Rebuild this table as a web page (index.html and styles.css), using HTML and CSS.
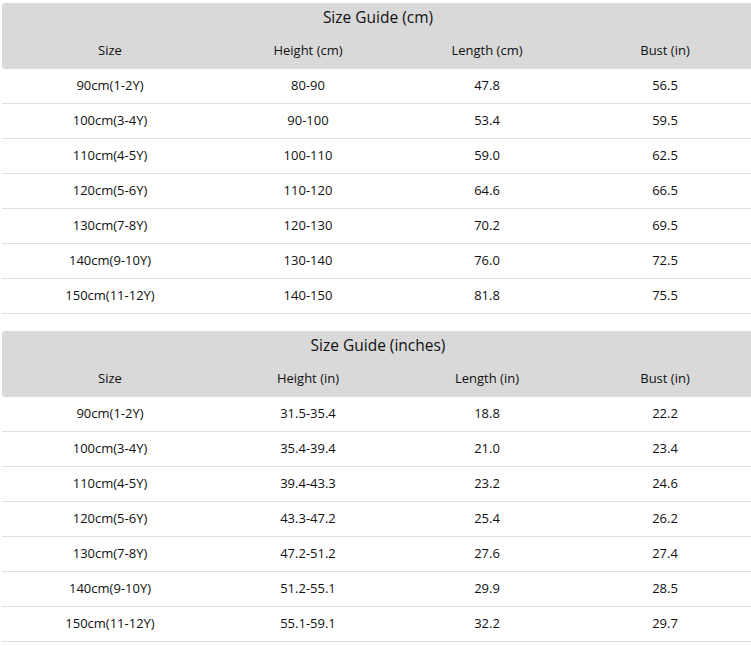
FILE: index.html
```html
<!DOCTYPE html>
<html>
<head>
<meta charset="utf-8">
<link rel="stylesheet" href="styles.css">
</head>
<body>
<div class="guide">
  <div class="head">
    <div class="title">Size Guide (cm)</div>
    <div class="cols"><span>Size</span><span>Height (cm)</span><span>Length (cm)</span><span>Bust (in)</span></div>
  </div>
  <div class="row"><span>90cm(1-2Y)</span><span>80-90</span><span>47.8</span><span>56.5</span></div>
  <div class="row"><span>100cm(3-4Y)</span><span>90-100</span><span>53.4</span><span>59.5</span></div>
  <div class="row"><span>110cm(4-5Y)</span><span>100-110</span><span>59.0</span><span>62.5</span></div>
  <div class="row"><span>120cm(5-6Y)</span><span>110-120</span><span>64.6</span><span>66.5</span></div>
  <div class="row"><span>130cm(7-8Y)</span><span>120-130</span><span>70.2</span><span>69.5</span></div>
  <div class="row"><span>140cm(9-10Y)</span><span>130-140</span><span>76.0</span><span>72.5</span></div>
  <div class="row"><span>150cm(11-12Y)</span><span>140-150</span><span>81.8</span><span>75.5</span></div>
</div>
<div class="guide second">
  <div class="head">
    <div class="title">Size Guide (inches)</div>
    <div class="cols"><span>Size</span><span>Height (in)</span><span>Length (in)</span><span>Bust (in)</span></div>
  </div>
  <div class="row"><span>90cm(1-2Y)</span><span>31.5-35.4</span><span>18.8</span><span>22.2</span></div>
  <div class="row"><span>100cm(3-4Y)</span><span>35.4-39.4</span><span>21.0</span><span>23.4</span></div>
  <div class="row"><span>110cm(4-5Y)</span><span>39.4-43.3</span><span>23.2</span><span>24.6</span></div>
  <div class="row"><span>120cm(5-6Y)</span><span>43.3-47.2</span><span>25.4</span><span>26.2</span></div>
  <div class="row"><span>130cm(7-8Y)</span><span>47.2-51.2</span><span>27.6</span><span>27.4</span></div>
  <div class="row"><span>140cm(9-10Y)</span><span>51.2-55.1</span><span>29.9</span><span>28.5</span></div>
  <div class="row"><span>150cm(11-12Y)</span><span>55.1-59.1</span><span>32.2</span><span>29.7</span></div>
</div>
</body>
</html>
```
FILE: styles.css
```css
html, body {
  margin: 0;
  padding: 0;
  background: #ffffff;
  overflow: hidden;
}
body {
  padding: 3px 0 0 2px;
  font-family: "Open Sans", "Noto Sans", sans-serif;
  font-size: 13px;
  color: #111111;
}
.guide {
  width: 752px;
}
.second {
  margin-top: 17px;
}
.head {
  background: #d9d9d9;
  border-radius: 3px;
  height: 66px;
}
.title {
  height: 29px;
  line-height: 29px;
  text-align: center;
  font-size: 15.5px;
}
.cols, .row {
  display: grid;
  grid-template-columns: 216px 180px 178px 178px;
  align-items: start;
  text-align: center;
}
.cols {
  height: 37px;
  line-height: 37px;
}
.row {
  height: 34px;
  line-height: 32px;
  border-bottom: 1px solid #e0e0e0;
}
```
